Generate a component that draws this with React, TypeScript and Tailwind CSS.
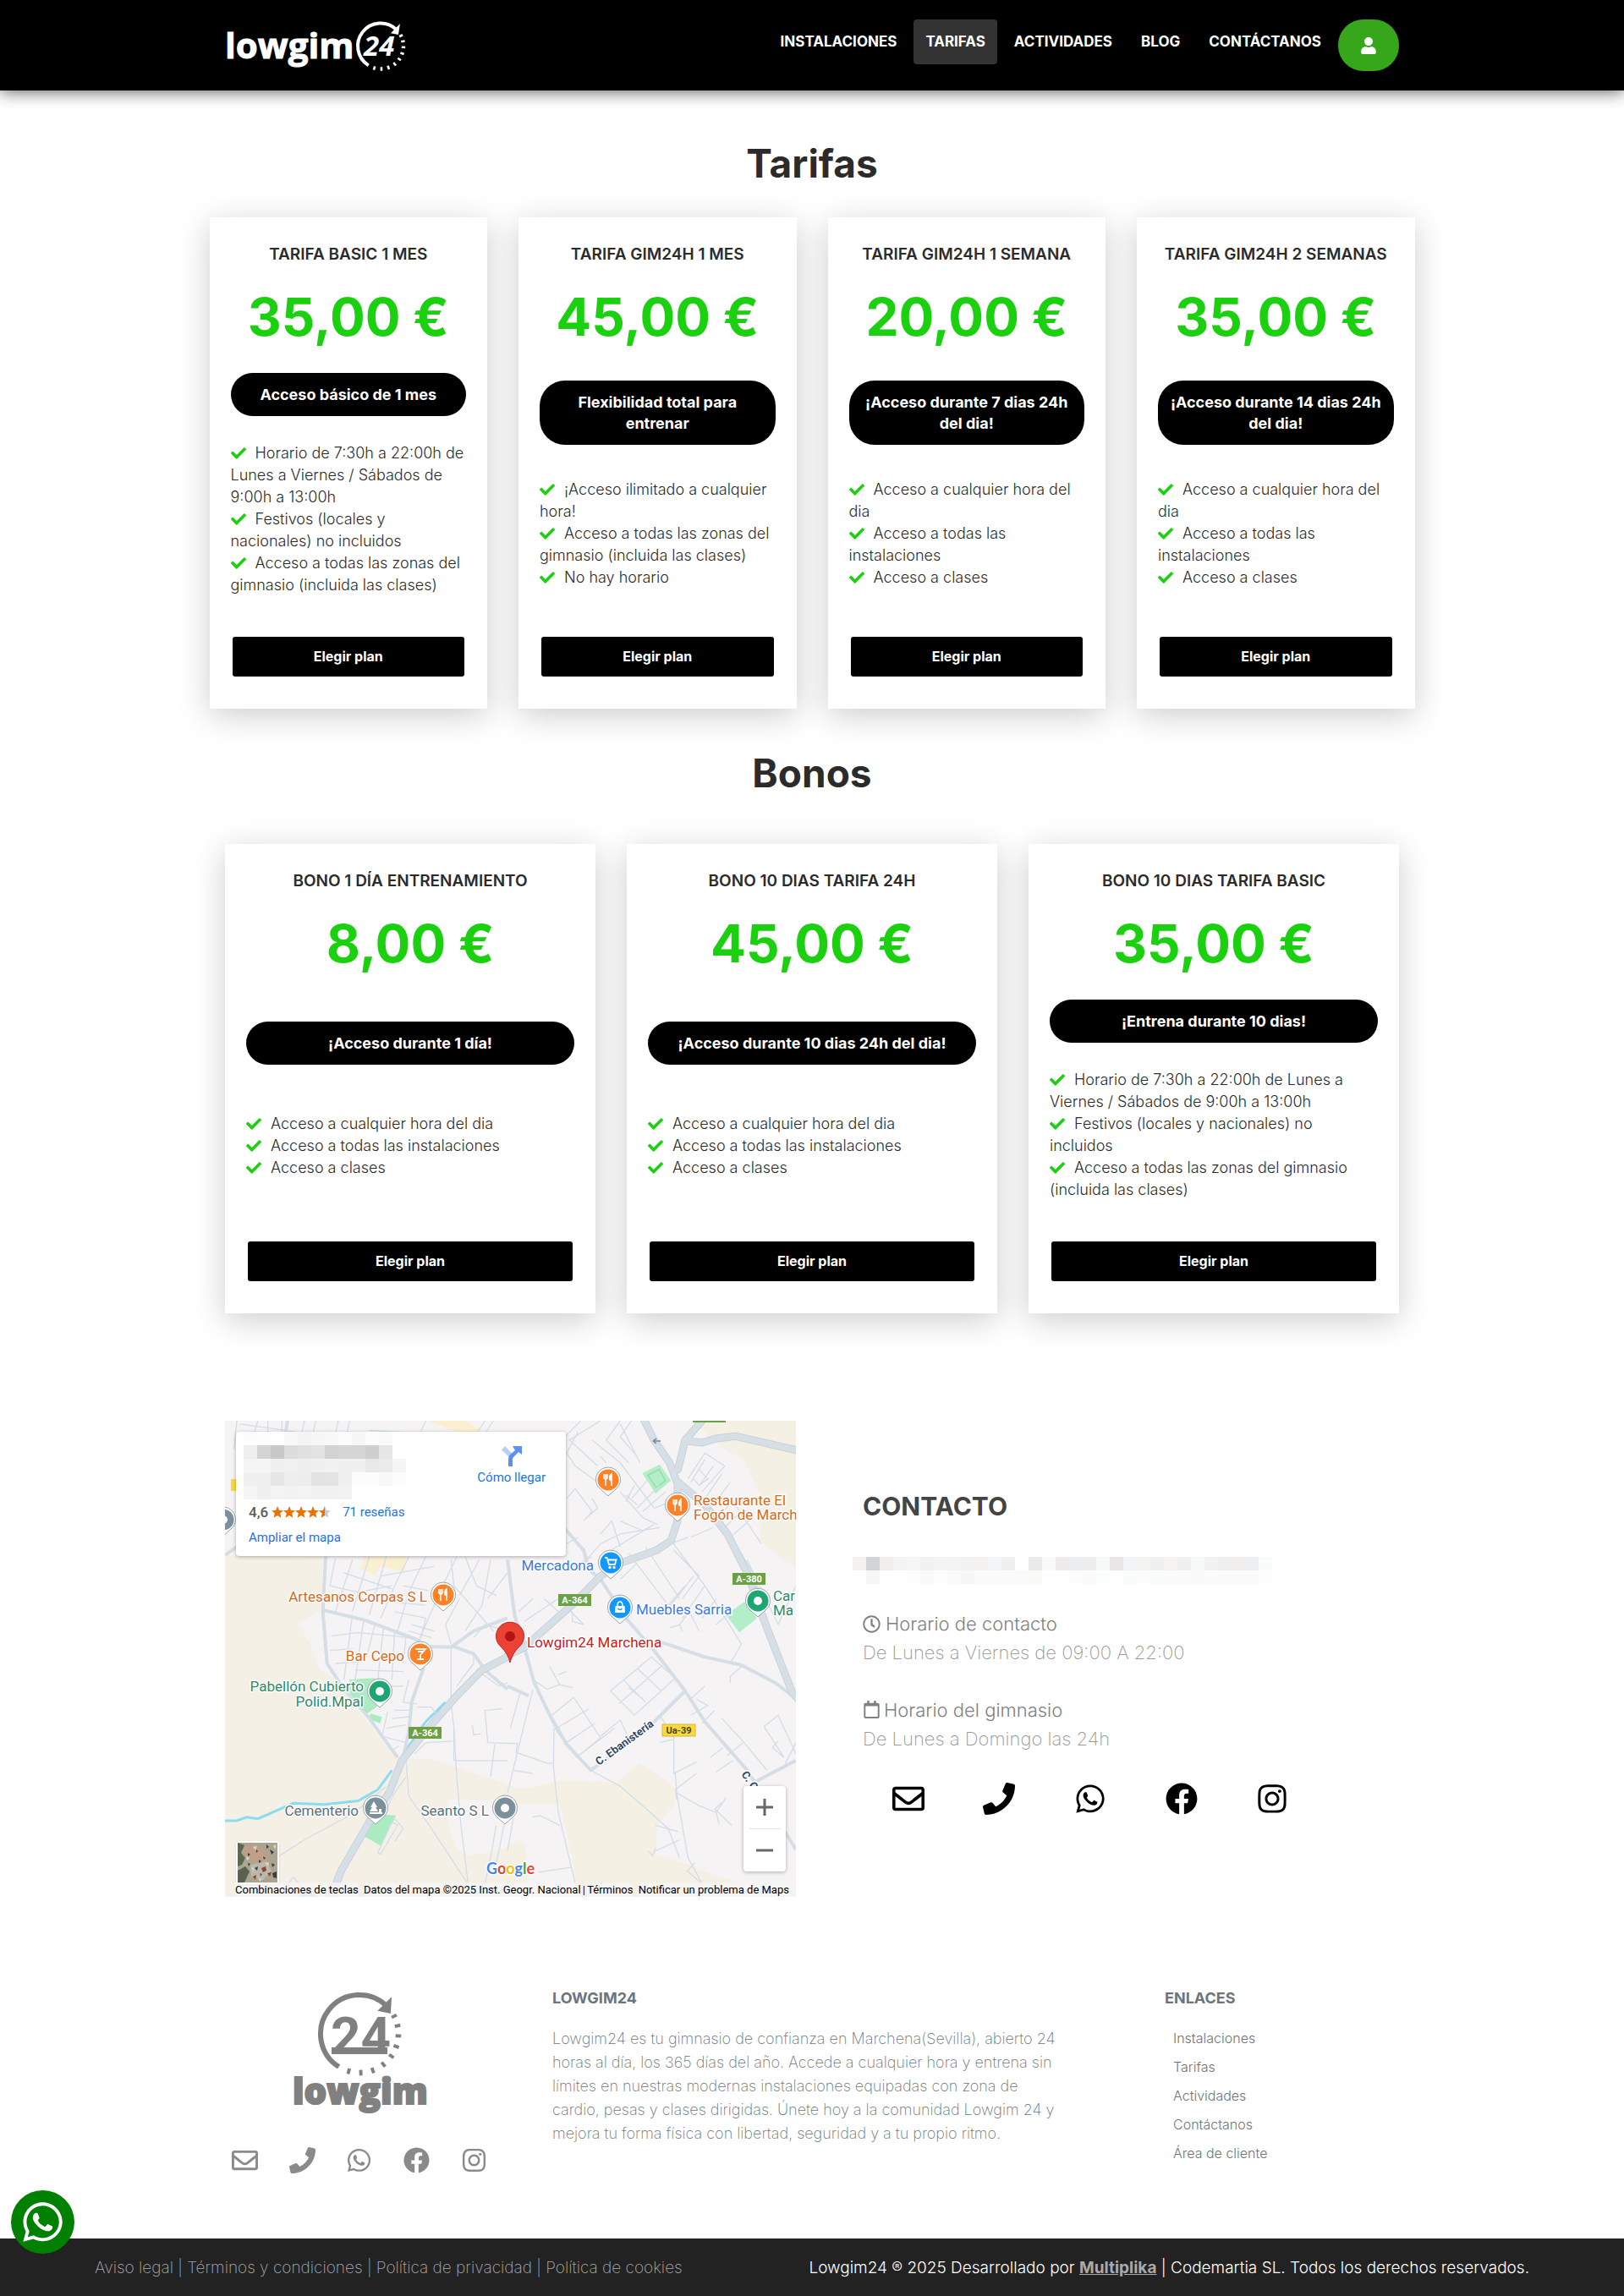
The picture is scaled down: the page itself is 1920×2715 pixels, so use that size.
import React from "react";
import {
  FaCheck,
  FaFacebook,
  FaInstagram,
  FaPhone,
  FaRegCalendar,
  FaRegClock,
  FaRegEnvelope,
  FaUser,
  FaWhatsapp,
} from "react-icons/fa";

type Plan = { title: string; price: string; tagline: string; features: string[] };

const tarifas: Plan[] = [
  {
    title: "TARIFA BASIC 1 MES",
    price: "35,00 €",
    tagline: "Acceso básico de 1 mes",
    features: [
      "Horario de 7:30h a 22:00h de Lunes a Viernes / Sábados de 9:00h a 13:00h",
      "Festivos (locales y nacionales) no incluidos",
      "Acceso a todas las zonas del gimnasio (incluida las clases)",
    ],
  },
  {
    title: "TARIFA GIM24H 1 MES",
    price: "45,00 €",
    tagline: "Flexibilidad total para entrenar",
    features: [
      "¡Acceso ilimitado a cualquier hora!",
      "Acceso a todas las zonas del gimnasio (incluida las clases)",
      "No hay horario",
    ],
  },
  {
    title: "TARIFA GIM24H 1 SEMANA",
    price: "20,00 €",
    tagline: "¡Acceso durante 7 dias 24h del dia!",
    features: ["Acceso a cualquier hora del dia", "Acceso a todas las instalaciones", "Acceso a clases"],
  },
  {
    title: "TARIFA GIM24H 2 SEMANAS",
    price: "35,00 €",
    tagline: "¡Acceso durante 14 dias 24h del dia!",
    features: ["Acceso a cualquier hora del dia", "Acceso a todas las instalaciones", "Acceso a clases"],
  },
];

const bonos: Plan[] = [
  {
    title: "BONO 1 DÍA ENTRENAMIENTO",
    price: "8,00 €",
    tagline: "¡Acceso durante 1 día!",
    features: ["Acceso a cualquier hora del dia", "Acceso a todas las instalaciones", "Acceso a clases"],
  },
  {
    title: "BONO 10 DIAS TARIFA 24H",
    price: "45,00 €",
    tagline: "¡Acceso durante 10 dias 24h del dia!",
    features: ["Acceso a cualquier hora del dia", "Acceso a todas las instalaciones", "Acceso a clases"],
  },
  {
    title: "BONO 10 DIAS TARIFA BASIC",
    price: "35,00 €",
    tagline: "¡Entrena durante 10 dias!",
    features: [
      "Horario de 7:30h a 22:00h de Lunes a Viernes / Sábados de 9:00h a 13:00h",
      "Festivos (locales y nacionales) no incluidos",
      "Acceso a todas las zonas del gimnasio (incluida las clases)",
    ],
  },
];

/* Open ring with an arrow head and the dotted remainder of the dial. */
function Dial({ cx, cy, r, w }: { cx: number; cy: number; r: number; w: number }) {
  const at = (deg: number, rad: number) => {
    const a = (deg * Math.PI) / 180;
    return [cx + rad * Math.cos(a), cy + rad * Math.sin(a)];
  };
  const [sx, sy] = at(122, r);
  const [ex, ey] = at(-46, r);
  const tip = at(-33, r - 2);
  const a = at(-49, r + w * 2);
  const b = at(-52, r - w * 1.9);
  const ticks = [-27, -12, 3, 19, 35, 52, 70, 88, 106];
  return (
    <g stroke="currentColor" fill="none">
      <path d={`M${sx} ${sy}A${r} ${r} 0 1 1 ${ex} ${ey}`} strokeWidth={w} />
      <path d={`M${tip[0]} ${tip[1]}L${a[0]} ${a[1]}L${b[0]} ${b[1]}Z`} fill="currentColor" stroke="none" />
      {ticks.map((t) => {
        const p = at(t, r - w * 0.55);
        const q = at(t, r + w * 0.55);
        return <path key={t} d={`M${p[0]} ${p[1]}L${q[0]} ${q[1]}`} strokeWidth={w * 0.65} />;
      })}
    </g>
  );
}

function HeaderLogo() {
  return (
    <svg viewBox="0 0 214 64" className="h-16 w-[214px] text-white" role="img" aria-label="lowgim24">
      <text x="0" y="46" fontFamily="'Open Sans', sans-serif" fontWeight="700" fontSize="42" fill="currentColor" stroke="currentColor" strokeWidth="1">
        lowgim
      </text>
      <text x="164" y="43" fontFamily="'Open Sans', sans-serif" fontWeight="700" fontStyle="italic" fontSize="33" fill="currentColor">
        24
      </text>
      <Dial cx={184} cy={31.5} r={27} w={4} />
    </svg>
  );
}

function FooterLogo() {
  return (
    <svg viewBox="0 0 160 148" className="h-[148px] w-40 text-[#808080]" role="img" aria-label="lowgim24">
      <Dial cx={80} cy={50} r={46} w={6} />
      <text x="46" y="74" fontFamily="Roboto, sans-serif" fontWeight="700" fontSize="62" fill="currentColor">
        24
      </text>
      <rect x="47" y="66" width="66" height="8" fill="currentColor" />
      <text x="1" y="133" fontFamily="'Open Sans', sans-serif" fontWeight="800" fontSize="42" fill="currentColor" stroke="currentColor" strokeWidth="2">
        lowgim
      </text>
    </svg>
  );
}

const navItems = ["INSTALACIONES", "TARIFAS", "ACTIVIDADES", "BLOG", "CONTÁCTANOS"];

function Header() {
  return (
    <header className="relative bg-black shadow-[0_2px_18px_rgba(0,0,0,0.6)]">
      <div className="mx-auto flex h-[107px] max-w-[1388px] items-start justify-between pt-[23px]">
        <a href="#inicio">
          <HeaderLogo />
        </a>
        <nav className="flex items-start gap-1.5">
          {navItems.map((item) => (
            <a
              key={item}
              href={"#" + item.toLowerCase()}
              className={
                item === "TARIFAS"
                  ? "h-[53px] rounded bg-[#333] px-3.5 text-[17px] leading-[52px] font-bold text-white"
                  : "h-[53px] px-3.5 text-[17px] leading-[52px] font-bold text-white"
              }
            >
              {item}
            </a>
          ))}
          <button
            type="button"
            aria-label="Área de cliente"
            className="flex h-[61px] w-[72px] items-center justify-center rounded-[30px] bg-[#36a61b] text-white"
          >
            <FaUser size={20} />
          </button>
        </nav>
      </div>
    </header>
  );
}

function PlanCard({ plan }: { plan: Plan }) {
  return (
    <article className="flex flex-col justify-between bg-white px-[25px] pt-[30px] pb-[38px] text-[#2b2b2b] shadow-[0_8px_36px_rgba(0,0,0,0.2)]">
      <header className="pb-7 text-center">
        <h3 className="text-[19px] leading-7 font-semibold">{plan.title}</h3>
        <p className="mt-[22px] text-[62px] leading-[76px] font-bold text-[#1bd00f]">{plan.price}</p>
      </header>
      <p className="rounded-[30px] bg-black px-3 py-[13px] text-center text-lg leading-[25px] font-bold text-white">
        {plan.tagline}
      </p>
      <ul className="my-[31px] text-lg leading-[26px] font-light">
        {plan.features.map((f) => (
          <li key={f}>
            <FaCheck size={18} className="mr-[11px] inline-block align-[-3px] text-[#1bd00f]" />
            {f}
          </li>
        ))}
      </ul>
      <button type="button" className="mx-0.5 mt-[17px] rounded-[3px] bg-black text-base leading-[47px] font-bold text-white">
        Elegir plan
      </button>
    </article>
  );
}

function Pin({ x, y, color, kind = "dot" }: { x: number; y: number; color: string; kind?: string }) {
  return (
    <g transform={`translate(${x} ${y})`}>
      <path d="M0 19L-9 11A14.5 14.5 0 1 1 9 11Z" fill="#fff" stroke="#9aa4ad" strokeWidth="1" strokeLinejoin="round" />
      <circle r="12.5" fill={color} />
      {kind === "dot" && <circle r="5" fill="#fff" />}
      {kind === "food" && (
        <g stroke="#fff" fill="none" strokeWidth="1.6">
          <path d="M-5 -7V-3Q-5 -1 -3 -1Q-1 -1 -1 -3V-7M-3 -7V7" />
          <path d="M4 7V-7Q1 -5 2 0H4" fill="#fff" />
        </g>
      )}
      {kind === "bar" && <path d="M-6 -6H6L0 1V6M-4 6H4M-3 -3H3" stroke="#fff" strokeWidth="1.8" fill="none" />}
      {kind === "cart" && (
        <g stroke="#fff" strokeWidth="1.8" fill="none">
          <path d="M-7 -6H-4.500L-2 2H5L6.500 -3.500H-3" />
          <circle cx="-1" cy="5.500" r=".8" />
          <circle cx="4" cy="5.500" r=".8" />
        </g>
      )}
      {kind === "bag" && (
        <g>
          <path d="M-5.500 -2H5.500L6 6H-6Z" fill="#fff" />
          <path d="M-3 -2Q-3 -7 0 -7Q3 -7 3 -2" stroke="#fff" strokeWidth="1.600" fill="none" />
          <path d="M-2.500 1Q0 4 2.500 1" stroke={color} strokeWidth="1.300" fill="none" />
        </g>
      )}
      {kind === "tree" && <path d="M-2 -8L2 -1H0L3 4H-7L-4 -1H-6ZM-7 5H8V7H-7ZM4 1H7V5H4Z" fill="#fff" />}
    </g>
  );
}

function Road({ x, y, label, yellow }: { x: number; y: number; label: string; yellow?: boolean }) {
  return (
    <g>
      <rect x={x} y={y} width="39" height="14" fill={yellow ? "#fbd93d" : "#6ba144"} stroke={yellow ? "#d9b92c" : "none"} />
      <text
        x={x + 19.5}
        y={y + 11}
        textAnchor="middle"
        fontSize="11"
        fontWeight="700"
        fontFamily="Roboto, sans-serif"
        fill={yellow ? "#4c4420" : "#fff"}
      >
        {label}
      </text>
    </g>
  );
}

type Place = { x: number; y: number; text: string; color: string; end?: boolean };

const places: Place[] = [
  { x: 239, y: 214, text: "Artesanos Corpas S L", color: "#d9681d", end: true },
  { x: 212, y: 284, text: "Bar Cepo", color: "#d9681d", end: true },
  { x: 164, y: 320, text: "Pabellón Cubierto", color: "#2f8a64", end: true },
  { x: 164, y: 338, text: "Polid.Mpal", color: "#2f8a64", end: true },
  { x: 158, y: 467, text: "Cementerio", color: "#5b6f7b", end: true },
  { x: 312, y: 467, text: "Seanto S L", color: "#5b6f7b", end: true },
  { x: 554, y: 100, text: "Restaurante El", color: "#d9681d" },
  { x: 554, y: 117, text: "Fogón de March", color: "#d9681d" },
  { x: 436, y: 177, text: "Mercadona", color: "#3b78e7", end: true },
  { x: 486, y: 229, text: "Muebles Sarria", color: "#3b78e7" },
  { x: 648, y: 213, text: "Car", color: "#2f8a64" },
  { x: 648, y: 230, text: "Ma", color: "#2f8a64" },
  { x: 357, y: 268, text: "Lowgim24 Marchena", color: "#c5221f" },
];

const WEST = "matrix(.33333 0 0 .38265 -16 -19.13)";
const EAST = "matrix(.33333 0 0 .38265 334 -19.13)";

const westStreets = [
  "M440 475L420 560M500 480L470 560L440 640M560 470L500 640M620 470L560 650M700 470L650 560L600 660M760 470L700 580L660 700M870 470L820 560L740 720",
  "M420 560L520 580L640 560M470 520L640 570M600 530L790 500M640 610L760 620M680 560L770 575M650 640L760 660L740 730M710 680L790 700M700 700L780 720",
  "M425 715L520 705L700 720M420 760L500 755M440 800L520 795M500 650L470 850M540 665L510 850M580 680L550 780M610 690L590 850M650 700L640 850M690 715L680 800",
  "M510 820L680 825M600 870L680 870M700 850L680 920L730 925M650 945L700 945M640 970L700 965M620 1000L690 990M625 950L605 1025L690 1045M730 935L780 935L800 960",
  "M850 480L860 560L930 630L1000 700M880 600L830 680L850 740M900 470L940 560L1010 590M950 480L880 590M990 480L960 620L900 700M930 720L970 680L1050 700M1050 520L980 600",
  "M850 750V920L860 1000V1100M930 770V800L870 870M940 820L1020 870L1050 860M1030 940L970 945L980 1045L1050 1047M925 990L930 1020L955 1018M860 1100H1050M1005 1050L990 1150",
  "M860 1000L870 1150L885 1300L910 1480M690 1100L700 1210L780 1310L905 1475M690 1150L650 1200L610 1270M720 1080L760 1045L855 1040M640 1070L665 1055",
  "M240 1395L330 1345L500 1265L620 1180M600 1390L660 1300L640 1290L590 1385ZM650 1280L680 1310L650 1350M1010 1300L990 1400L960 1521M1040 1290L1010 1420M480 1420L440 1521M290 1460L240 1521M290 1460L350 1521",
  "M90 50L80 140M165 50L150 90M200 50V90M250 50V90M330 50L320 90M370 50L360 90M450 50L440 90M490 50L480 90M560 80L680 85M760 50L740 90M970 50L940 90M1000 50L970 90M100 60L300 85",
];

const eastStreets = [
  "M260 50L180 120L140 90M250 85L210 150L240 190L320 240M330 50L220 110L320 190M330 160L350 180M400 50L350 110L430 180M440 50L400 100L460 160M470 180L400 60M300 110L400 180L520 320M400 270L480 350L530 370",
  "M210 290L240 260L300 330L270 360M300 290L320 320L280 350M330 400L370 360L400 440M400 360L480 390L520 370L330 470M260 500L330 430L400 400L540 380M210 430L250 410M230 500L300 470",
  "M420 280L460 310M440 290L500 230M460 320L540 250M480 330L560 270M450 250L420 300M520 320L580 300M640 230L700 150L770 190L690 270M700 170L650 240M730 190L680 250M760 215L700 290M790 240L730 310M680 200L710 230L680 250L660 230M800 300L740 350M840 320L770 380M870 350L790 410",
  "M800 300L900 430M740 330L870 520L900 600M850 480L960 680M580 420L700 560L830 740L790 800M590 450L680 530L620 600M640 410L580 430M650 410L730 380M430 460L570 620M490 440L610 600M460 490L400 540M570 620L630 560M660 530L560 640M740 600L690 660M780 650L740 680M700 560L620 660",
  "M575 690L610 680L645 640L680 700M610 680L620 700M830 810L790 840V860M1023 560L960 680M90 600L40 640M180 640L130 600M270 680L180 600L60 670M230 640V670L270 680M150 810L185 865L140 880L90 850M185 865L230 875M210 825L180 835",
  "M365 885L510 780L595 845L450 960ZM410 850L490 920M460 815L545 885M395 925L550 805M430 875L480 910M150 965L235 905L330 1030L245 1090L175 1010ZM175 1000L290 940M200 1050L310 985M330 1025L400 975L440 1050M245 1090L380 1000",
  "M540 960L590 1030V1140L670 1105M540 1045L590 1035M595 1140L600 1200L640 1400L690 1480M600 1200L680 1240L740 1260L775 1215M740 1260L750 1295M760 1230L735 1250L795 1300M600 1220L595 1190L670 1140",
  "M760 970L835 1040L920 1130M835 1045L780 1085M800 1100L740 1135M670 910L710 930L650 960M735 945L690 985M700 870L650 910M765 1060L720 1090M910 995L960 960L1023 1080M910 995L980 1090L940 1060L960 1040M1023 1045L985 1110",
  "M0 1047H35L30 1075L140 1108H165M20 1130L90 1140M45 890L10 1000M90 880L0 1200M165 1000L163 1120L180 1260L240 1480M90 1275L115 1270L185 1300M525 1380L610 1345M525 1300L605 1320M500 1380L515 1395L525 1370M640 1440L665 1415M690 1480L635 1440M110 1445L225 1430M20 1280L0 1380",
];

function MapCanvas() {
  const thin = { stroke: "#d3dde6", strokeWidth: 1.3, fill: "none" } as const;
  const mid = { stroke: "#d5dde5", strokeWidth: 4, fill: "none", strokeLinejoin: "round" } as const;
  const big = { fill: "none", strokeLinejoin: "round", strokeLinecap: "round" } as const;
  return (
    <svg viewBox="0 0 675 563" preserveAspectRatio="xMidYMid slice" className="block h-full w-full bg-[#f5f3f4]" role="img" aria-label="Mapa de Marchena">
      <g transform={WEST}>
        <path
          d="M48 465L395 470L390 635L305 676L345 730L385 820L430 842L520 945L650 1085L720 1095L790 1097L870 1120L1000 1160L1100 1190V1235L1020 1225L840 1220V1300L870 1370L910 1392L1000 1385L1100 1350V1521H48Z"
          fill="#f4f0e6"
        />
        <path d="M540 470H690L685 520L600 500L580 525L530 510ZM770 50H900L965 85H870Z" fill="#faefd0" />
        <path d="M490 850L580 845L600 925L545 960L490 890ZM565 955L605 965L598 985L555 972ZM555 1265L655 1270L600 1363L533 1330Z" fill="#aaebc2" />
        <path d="M310 1521Q342 1495 375 1521Z" fill="#8ecbff" />
      </g>
      <g transform={EAST}>
        <path
          d="M660 50H1023V500L960 470L895 420L905 300L870 230L840 175L740 120ZM0 1188L80 1185L190 1160L390 1168L465 1108L545 1150L595 1185L590 1240L530 1300L525 1390L640 1420L750 1460L840 1478V1521H80L60 1350L0 1362V1521H240L230 1400L185 1235H0Z"
          fill="#f4f0e4"
        />
        <path d="M478 212L540 185L580 235L525 275ZM775 650L840 610L885 660L822 704Z" fill="#b2efc8" />
        <path d="M498 218L538 200L560 235L528 258Z" fill="none" stroke="#98dfb2" strokeWidth="5" />
      </g>
      <g transform={WEST}>
        <path d="M48 1286L90 1286L125 1275L165 1280L290 1232L400 1236L520 1225L590 1190L640 1130M680 1080L760 980L830 920" stroke="#8bdcf0" strokeWidth="3" fill="none" vectorEffect="non-scaling-stroke" />
        {westStreets.map((d) => (
          <path key={d} d={d} vectorEffect="non-scaling-stroke" {...thin} />
        ))}
        <path
          d="M405 470L395 640L410 800L470 880L560 970L660 1090M395 635L540 665L740 730M775 748L850 750L930 700L1050 660M750 750V820L710 920L700 1010L680 1090M850 745L930 770L970 820L1050 880M270 50L262 90M48 465L90 440"
          vectorEffect="non-scaling-stroke"
          {...mid}
        />
      </g>
      <g transform={EAST}>
        {eastStreets.map((d) => (
          <path key={d} d={d} vectorEffect="non-scaling-stroke" {...thin} />
        ))}
        <path
          d="M60 750L95 860L150 960L210 1050L295 1130L480 1015L630 885M330 540L420 660L520 760L630 885L700 980L850 1130L1023 1375M530 730L700 780L830 805L950 860L1010 900M200 380L270 450L290 510L330 540M0 480L25 650L60 750M870 1170L1023 1100M0 870L75 900"
          vectorEffect="non-scaling-stroke"
          {...mid}
        />
        <path d="M295 1130L400 1180L480 1240L570 1310L610 1400" vectorEffect="non-scaling-stroke" {...thin} />
      </g>
      {[
        { c: "#c3ccd6", w: 9 },
        { c: "#d6dee6", w: 7.5 },
      ].map(({ c, w }) => (
        <g key={c}>
          <g transform={WEST}>
            <path d="M420 1530L460 1440L560 1290L630 1200L675 1100L760 1010L870 900L960 820L1055 778" vectorEffect="non-scaling-stroke" {...big} stroke={c} strokeWidth={w} />
          </g>
          <g transform={EAST}>
            <path
              d="M0 775L60 750L150 680L240 610L330 530L400 490L530 450L580 420L603 360V250M605 250L575 180L520 110L480 40M605 200L630 110L700 40M630 112L690 118L740 105L810 98L1030 142M605 240L700 310L780 400L850 520L920 690L1010 890L1030 910"
              vectorEffect="non-scaling-stroke"
              {...big}
              stroke={c}
              strokeWidth={w}
            />
          </g>
        </g>
      ))}
      <path d="M506 24H515M506 24L510 21M506 24L510 27" stroke="#77858f" strokeWidth="1.500" fill="none" />
      <rect x="553" y="0" width="39" height="2" fill="#6ba144" />
      <rect x="7" y="69" width="20" height="14" fill="#fbd93d" />
      <Road x={217} y={362} label="A-364" />
      <Road x={394} y={205} label="A-364" />
      <Road x={600} y={180} label="A-380" />
      <Road x={517} y={359} label="Ua-39" yellow />
      <g fontFamily="Roboto, sans-serif" fontSize="13" fontWeight="700" fill="#34496a" stroke="#fff" strokeWidth="3" style={{ paintOrder: "stroke" }}>
        <text transform="translate(442 408) rotate(-36)">C. Ebanistería</text>
        <text transform="translate(610 418) rotate(56)">C. Orfebrería</text>
      </g>
      <Pin x={-2} y={117} color="#7b909b" />
      <Pin x={258} y={206} color="#ff8126" kind="food" />
      <Pin x={231} y={276} color="#ff8126" kind="bar" />
      <Pin x={183} y={320} color="#1ea672" />
      <Pin x={178} y={458} color="#7b909b" kind="tree" />
      <Pin x={331} y={458} color="#7b909b" />
      <Pin x={453} y={70} color="#ff8126" kind="food" />
      <Pin x={535} y={100} color="#ff8126" kind="food" />
      <Pin x={456} y={168} color="#1098ff" kind="cart" />
      <Pin x={467} y={221} color="#1098ff" kind="bag" />
      <Pin x={630} y={213} color="#1ea672" />
      <path d="M337 286Q335 276 326 267A16.500 16.500 0 1 1 348 267Q339 276 337 286Z" fill="#ea4335" stroke="#c5221f" />
      <circle cx="337" cy="255" r="6" fill="#b31412" />
      <g fontFamily="Roboto, sans-serif" fontSize="17" stroke="#fff" strokeWidth="3" strokeLinejoin="round">
        {places.map((p) => (
          <text key={p.text} x={p.x} y={p.y} fill={p.color} textAnchor={p.end ? "end" : "start"} style={{ paintOrder: "stroke" }}>
            {p.text}
          </text>
        ))}
      </g>
      <text x="309" y="536" fontFamily="Lato, sans-serif" fontSize="18" fontWeight="700" stroke="#fff" strokeWidth="3" style={{ paintOrder: "stroke" }}>
        <tspan fill="#4285f4">G</tspan>
        <tspan fill="#ea4335">o</tspan>
        <tspan fill="#fbbc04">o</tspan>
        <tspan fill="#4285f4">g</tspan>
        <tspan fill="#34a853">l</tspan>
        <tspan fill="#ea4335">e</tspan>
      </text>
    </svg>
  );
}

const nameMosaic = [
  "#fcfcfc #fdfdfd #fefefe #f8f8f8 #f4f4f4 #f6f6f6 #f8f8f8 #fcfcfc #f7f7f7 #fcfcfc #fafafa #ffffff",
  "#efefef #d4d4d4 #c8c8c8 #dcdcdc #e0e0e0 #e3e3e3 #d2d2d2 #d6d6d6 #d6d6d6 #cfcfcf #e6e6e6 #ffffff",
  "#f5f5f5 #f5f5f5 #f0f0f0 #f1f1f1 #eeeeee #f0f0f0 #f1f1f1 #f0f0f0 #f0f0f0 #e8e8e8 #ebebeb #f5f5f5",
  "#f0f0f0 #f0f0f0 #e6e6e6 #eeeeee #ededed #e3e3e3 #e4e4e4 #f0f0f0 #fcfcfc #fcfcfc #f8f8f8 #fcfcfc",
  "#f5f5f5 #f0f0f0 #f4f4f4 #f2f2f2 #f4f4f4 #f1f1f1 #f1f1f1 #f2f2f2 #ffffff #ffffff #ffffff #ffffff",
].map((r) => r.split(" "));

const addressMosaic = [
  "#f3f2f1 #d3d4d6 #f1efed #f4f4f4 #f6f6f6 #f1f1f1 #f4f4f4 #f3f3f3 #f2f2f2 #f4f2f1 #f3f5f8 #f0f0f0 #fefefe #eaeaea #f9f9f9 #eceaeb #ebedf1 #ededee #f7f9f8 #e9e6e8 #f2f3f6 #f3f3f1 #f0f0f0 #f4f3f1 #f0f0f0 #f7f9f8 #f1f1f1 #efeff0 #f1efee #edeff1 #fafcfb",
  "#ffffff #f7f7f7 #fefefe #fefefe #fdfdfd #f9f9f9 #fdfdfd #fafafa #f7f7f7 #fbfbfb #fbfbfb #fbfbfb #fafafa #f9f9f8 #fefefe #fefefe #fcfcfc #fafafa #fcfefd #fdfefd #fafcfb #fbfcfb #fafcfb #fbfbfb #fbfbfb #f9f9f9 #fbfbfb #fbfbfb #fbfbfb #fbfbfb #fdfdfd",
].map((r) => r.split(" "));

function Mosaic({ rows }: { rows: string[][] }) {
  return (
    <div aria-hidden="true">
      {rows.map((row, i) => (
        <div key={i} className="flex">
          {row.map((c, j) => (
            <span key={j} className="size-4" style={{ backgroundColor: c }} />
          ))}
        </div>
      ))}
    </div>
  );
}

const star = "M7 0L9 5L14 5.300L10.200 8.600L11.400 13.800L7 11L2.600 13.800L3.800 8.600L0 5.300L5 5Z";

function Stars() {
  return (
    <svg viewBox="0 0 70 14" className="h-3.5 w-[70px]" role="img" aria-label="4,6 de 5 estrellas">
      <g fill="#e77400">
        {[0, 14, 28, 42].map((x) => (
          <path key={x} d={star} transform={`translate(${x} 0)`} />
        ))}
      </g>
      <path d={star} transform="translate(56 0)" fill="#c8cbd0" />
      <path d="M7 0V11L2.600 13.800L3.800 8.600L0 5.300L5 5Z" transform="translate(56 0)" fill="#e77400" />
    </svg>
  );
}

function MapPanel() {
  return (
    <div className="relative h-[563px] overflow-hidden font-[Roboto,sans-serif]">
      <MapCanvas />
      <div className="absolute top-[13px] left-[13px] flex h-[147px] w-[390px] justify-between rounded-sm bg-white pr-6 pl-[9px] text-[15px] shadow-[0_1px_4px_rgba(0,0,0,0.3)]">
        <div>
          <Mosaic rows={nameMosaic} />
          <p className="mt-[3px] ml-1.5 flex items-center text-[#5a5a5a]">
            <span className="mr-1 text-[17px] leading-6 font-medium">4,6</span>
            <Stars />
            <a href="#resenas" className="ml-3.5 text-[#1a73e8]">
              71 reseñas
            </a>
          </p>
          <a href="#mapa" className="mt-1.5 ml-1.5 block leading-6 text-[#1a73e8]">
            Ampliar el mapa
          </a>
        </div>
        <a href="#llegar" className="flex flex-col items-center pt-[17px] text-[#1a73e8]">
          <svg viewBox="0 0 24 24" className="size-6" aria-hidden="true">
            <path d="M4 0L0 4.500L9 13L12.500 9Z" fill="#b9d0fb" />
            <path d="M8 24V15Q8 12 10 10L16 5L13 0H24V10L20 7L14 13Q13 14 13 16V24Z" fill="#5b91f5" />
          </svg>
          <span className="mt-0.5">Cómo llegar</span>
        </a>
      </div>
      <div className="absolute bottom-[15px] left-[13px] size-[51px] rounded-sm border-2 border-white bg-[#a39c8b] shadow">
        <svg viewBox="0 0 47 47" className="size-full" aria-hidden="true">
          <path d="M0 0H47V47H0Z" fill="#aaa591" />
          <path d="M6 4L20 2L34 10L38 20L25 26L10 20Z" fill="#bd9f8a" />
          <path d="M0 0L8 3L4 12L9 18L5 26L0 28Z" fill="#5d6850" />
          <path d="M0 33L9 28L14 34L8 47H0Z" fill="#5a6153" />
          <path d="M15 26L34 22L40 33L30 44L16 40Z" fill="#bcb8ad" />
          <path d="M28 30L33 28L34 33L30 35ZM35 36L40 35L38 40ZM18 40L22 38L21 44ZM26 36L29 37L27 40Z" fill="#86492f" />
          <path
            d="M38 8L43 11L40 14ZM20 30L24 28L23 33ZM30 16L33 18L31 20ZM12 12L15 14L12 16ZM41 36L46 34V42L42 41ZM25 20L28 22L25 24ZM34 2L37 5L34 7ZM12 24L15 25L13 28ZM40 24L44 26L41 29ZM22 8L24 10L22 12Z"
            fill="#3f3f38"
          />
          <path d="M18 5L23 4L21 9ZM32 24L37 23L36 28ZM16 30L19 29V34ZM24 42L29 43L26 46ZM42 4L45 2V8ZM10 16L14 18L11 21Z" fill="#ddd6c8" />
        </svg>
      </div>
      <div className="absolute right-3 bottom-[30px] flex w-[50px] flex-col items-center rounded-sm bg-white shadow-[0_1px_4px_rgba(0,0,0,0.3)]">
        <button type="button" aria-label="Ampliar" className="flex h-[50px] w-full items-center justify-center">
          <svg viewBox="0 0 20 20" className="size-5">
            <path d="M0 10H20M10 0V20" stroke="#666" strokeWidth="3" />
          </svg>
        </button>
        <span className="h-px w-[37px] bg-[#e6e6e6]" />
        <button type="button" aria-label="Reducir" className="flex h-[50px] w-full items-center justify-center">
          <svg viewBox="0 0 20 20" className="size-5">
            <path d="M0 10H20" stroke="#666" strokeWidth="3" />
          </svg>
        </button>
      </div>
      <div className="absolute right-0 bottom-0 left-0 flex justify-between pr-2 pl-3 text-[13px] leading-[17px] text-black">
        <button type="button" className="bg-[#f5f5f5]/80">
          Combinaciones de teclas
        </button>
        <span className="bg-[#f5f5f5]/80">Datos del mapa ©2025 Inst. Geogr. Nacional</span>
        <span className="-mx-1 bg-[#f5f5f5]/80">|</span>
        <a href="#terminos" className="bg-[#f5f5f5]/80">
          Términos
        </a>
        <a href="#notificar" className="bg-[#f5f5f5]/80">
          Notificar un problema de Maps
        </a>
      </div>
    </div>
  );
}

const socials = [
  { label: "Correo", Icon: FaRegEnvelope },
  { label: "Teléfono", Icon: FaPhone },
  { label: "WhatsApp", Icon: FaWhatsapp },
  { label: "Facebook", Icon: FaFacebook },
  { label: "Instagram", Icon: FaInstagram },
];

function Socials({ size }: { size: number }) {
  return (
    <div className="grid grid-cols-5 justify-items-center">
      {socials.map(({ label, Icon }) => (
        <a key={label} href={"#" + label.toLowerCase()} aria-label={label}>
          <Icon size={size} />
        </a>
      ))}
    </div>
  );
}

function Contact() {
  return (
    <div className="pt-[83px] pl-[41px] text-[22px] leading-[34px]">
      <h2 className="text-3xl leading-9 font-bold text-[#444]">CONTACTO</h2>
      <div className="mt-[42px] -ml-3">
        <Mosaic rows={addressMosaic} />
      </div>
      <div className="mt-[30px]">
        <p className="font-light text-[#808080]">
          <FaRegClock size={21} className="mr-1.5 inline-block align-[-3px]" />
          Horario de contacto
        </p>
        <p className="font-extralight text-[#999]">De Lunes a Viernes de 09:00 A 22:00</p>
      </div>
      <div className="mt-[34px]">
        <p className="font-light text-[#808080]">
          <FaRegCalendar size={21} className="mr-1 inline-block align-[-2px]" />
          Horario del gimnasio
        </p>
        <p className="font-extralight text-[#999]">De Lunes a Domingo las 24h</p>
      </div>
      <div className="mt-[35px] max-w-[538px] text-black">
        <Socials size={38} />
      </div>
    </div>
  );
}

const links = ["Instalaciones", "Tarifas", "Actividades", "Contáctanos", "Área de cliente"];

function Footer() {
  return (
    <footer className="mt-[106px]">
      <div className="mx-auto flex max-w-[1408px] gap-[59px] pb-[77px] text-[#6c757d]">
        <div className="w-[338px] shrink-0 pt-1.5">
          <div className="flex justify-center">
            <FooterLogo />
          </div>
          <div className="mt-9 text-[#8a8a8a]">
            <Socials size={31} />
          </div>
        </div>
        <div className="w-[665px] pr-16">
          <h2 className="text-lg leading-7 font-bold">LOWGIM24</h2>
          <p className="mt-5 text-lg leading-7 font-extralight">
            Lowgim24 es tu gimnasio de confianza en Marchena(Sevilla), abierto 24 horas al día, los 365 días del año.
            Accede a cualquier hora y entrena sin límites en nuestras modernas instalaciones equipadas con zona de
            cardio, pesas y clases dirigidas. Únete hoy a la comunidad Lowgim 24 y mejora tu forma física con libertad,
            seguridad y a tu propio ritmo.
          </p>
        </div>
        <div>
          <h2 className="text-lg leading-7 font-bold">ENLACES</h2>
          <ul className="mt-4 pl-2.5 text-base leading-[34px] font-light">
            {links.map((l) => (
              <li key={l}>
                <a href={"#" + l.toLowerCase()}>{l}</a>
              </li>
            ))}
          </ul>
        </div>
      </div>
      <div className="flex justify-between bg-[#222] px-28 text-[19px] leading-[69px]">
        <p className="font-extralight text-[#aaa]">
          <a href="#aviso">Aviso legal</a> | <a href="#condiciones">Términos y condiciones</a> |{" "}
          <a href="#privacidad">Política de privacidad</a> | <a href="#cookies">Política de cookies</a>
        </p>
        <p className="font-light text-white">
          Lowgim24 ® 2025 Desarrollado por{" "}
          <a href="#multiplika" className="font-bold text-[#aaa] underline">
            Multiplika
          </a>{" "}
          | Codemartia SL. Todos los derechos reservados.
        </p>
      </div>
    </footer>
  );
}

export default function App() {
  return (
    <div className="min-h-screen bg-white font-[Inter,sans-serif]">
      <Header />
      <main>
        <section className="mx-auto max-w-[1425px] pt-[60px]">
          <h1 className="text-center text-[46px] leading-[52px] font-bold text-[#2b2b2b]">Tarifas</h1>
          <div className="mt-[38px] grid grid-cols-4 gap-[37px]">
            {tarifas.map((p) => (
              <PlanCard key={p.title} plan={p} />
            ))}
          </div>
        </section>
        <section className="mx-auto max-w-[1388px] pt-[50px]">
          <h1 className="text-center text-[46px] leading-[52px] font-bold text-[#2b2b2b]">Bonos</h1>
          <div className="mt-[58px] grid grid-cols-3 gap-[37px]">
            {bonos.map((p) => (
              <PlanCard key={p.title} plan={p} />
            ))}
          </div>
        </section>
        <section className="mx-auto mt-[127px] grid max-w-[1388px] grid-cols-2 gap-[38px]">
          <MapPanel />
          <Contact />
        </section>
      </main>
      <Footer />
      <a
        href="#whatsapp"
        aria-label="WhatsApp"
        className="fixed bottom-[50px] left-[13px] flex size-[75px] items-center justify-center rounded-full bg-[green] text-white"
      >
        <FaWhatsapp size={53} />
      </a>
    </div>
  );
}
